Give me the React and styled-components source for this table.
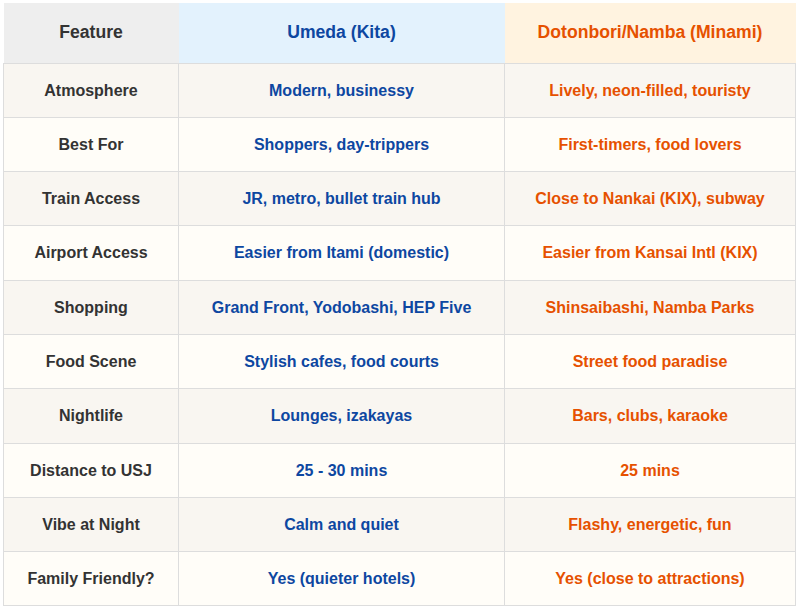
import React from 'react'
import styled, { createGlobalStyle } from 'styled-components'

const Global = createGlobalStyle`
    body {
        margin: 0;
        padding: 3px;
        background: #ffffff;
        font-family: 'Liberation Sans', Arial, sans-serif;
    }
`

const Table = styled.table`
    width: 792px;
    border-collapse: collapse;
    table-layout: fixed;
    font-family: 'Liberation Sans', Arial, sans-serif;
    font-weight: bold;
    text-align: center;
`

const Th = styled.th`
    height: 60px;
    padding: 0 8px;
    box-sizing: border-box;
    font-size: 17.6px;
    border-bottom: 1px solid #dddddd;
    background: ${p => p.$bg};
    color: ${p => p.$color};
`

const Row = styled.tr`
    background: ${p => (p.$odd ? '#f9f6f1' : '#fffdf8')};
`

const Td = styled.td`
    padding: 18px 8px 17.3px;
    line-height: 18px;
    font-size: 16px;
    border: 1px solid #dddddd;
    color: ${p => p.$color};
`

const columns = [
    { label: 'Feature', width: 175, bg: '#eeeeee', color: '#333333' },
    { label: 'Umeda (Kita)', width: 326, bg: '#e3f2fd', color: '#0d47a1' },
    { label: 'Dotonbori/Namba (Minami)', width: 291, bg: '#fff3e0', color: '#e65100' },
]

const rows = [
    ['Atmosphere', 'Modern, businessy', 'Lively, neon-filled, touristy'],
    ['Best For', 'Shoppers, day-trippers', 'First-timers, food lovers'],
    ['Train Access', 'JR, metro, bullet train hub', 'Close to Nankai (KIX), subway'],
    ['Airport Access', 'Easier from Itami (domestic)', 'Easier from Kansai Intl (KIX)'],
    ['Shopping', 'Grand Front, Yodobashi, HEP Five', 'Shinsaibashi, Namba Parks'],
    ['Food Scene', 'Stylish cafes, food courts', 'Street food paradise'],
    ['Nightlife', 'Lounges, izakayas', 'Bars, clubs, karaoke'],
    ['Distance to USJ', '25 - 30 mins', '25 mins'],
    ['Vibe at Night', 'Calm and quiet', 'Flashy, energetic, fun'],
    ['Family Friendly?', 'Yes (quieter hotels)', 'Yes (close to attractions)'],
]

export default function App() {
    return (
        <>
            <Global />
            <Table>
                <colgroup>
                    {columns.map(c => <col key={c.label} style={{ width: c.width }} />)}
                </colgroup>
                <thead>
                    <tr>
                        {columns.map(c => (
                            <Th key={c.label} $bg={c.bg} $color={c.color}>{c.label}</Th>
                        ))}
                    </tr>
                </thead>
                <tbody>
                    {rows.map((r, i) => (
                        <Row key={r[0]} $odd={i % 2 === 0}>
                            {r.map((cell, j) => (
                                <Td key={j} $color={columns[j].color}>{cell}</Td>
                            ))}
                        </Row>
                    ))}
                </tbody>
            </Table>
        </>
    )
}
